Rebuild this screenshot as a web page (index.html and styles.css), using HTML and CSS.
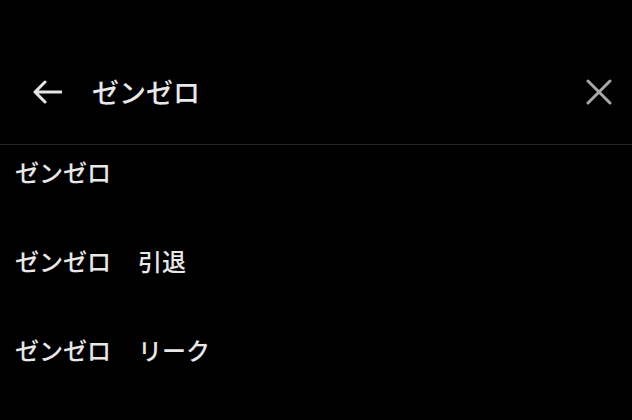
FILE: index.html
```html
<!DOCTYPE html>
<html lang="ja">
<head>
<meta charset="utf-8">
<link rel="stylesheet" href="styles.css">
</head>
<body>
<div class="screen">
  <header class="header">
    <button class="icon-btn back" aria-label="戻る">
      <svg width="30" height="24" viewBox="0 0 30 24"><path d="M29 12H3M13 2L3 12l10 10" fill="none" stroke="#e6e6e6" stroke-width="3" stroke-linecap="round" stroke-linejoin="round"/></svg>
    </button>
    <div class="title">ゼンゼロ</div>
    <button class="icon-btn close" aria-label="閉じる">
      <svg width="26" height="26" viewBox="0 0 26 26"><path d="M2 2L24 24M24 2L2 24" fill="none" stroke="#a8a8a8" stroke-width="3" stroke-linecap="round"/></svg>
    </button>
  </header>
  <ul class="list">
    <li class="item">ゼンゼロ</li>
    <li class="item">ゼンゼロ　<span class="sub">引退</span></li>
    <li class="item">ゼンゼロ　<span class="sub">リーク</span></li>
  </ul>
</div>
</body>
</html>
```
FILE: styles.css
```css
html, body {
  margin: 0;
  padding: 0;
  background: #000;
}
body {
  font-family: "Noto Sans CJK JP", "Noto Sans", sans-serif;
  color: #e8e8e8;
}
.screen {
  width: 632px;
  height: 420px;
  overflow: hidden;
}
.header {
  height: 145px;
  box-sizing: border-box;
  padding: 40px 20px 0 32px;
  display: flex;
  align-items: center;
  border-bottom: 1px solid #262626;
}
.icon-btn {
  background: none;
  border: 0;
  padding: 0;
  display: flex;
  align-items: center;
  justify-content: center;
}
.back {
  width: 30px;
  margin-right: 30px;
}
.title {
  flex: 1;
  font-size: 27px;
  font-weight: 500;
  line-height: 30px;
}
.close {
  width: 26px;
}
.list {
  list-style: none;
  margin: 0;
  padding: 0;
}
.item {
  height: 89px;
  box-sizing: border-box;
  padding: 12px 0 0 15px;
  font-size: 24px;
  font-weight: 500;
  line-height: 30px;
}
.sub {
  margin-left: 3px;
}
```
